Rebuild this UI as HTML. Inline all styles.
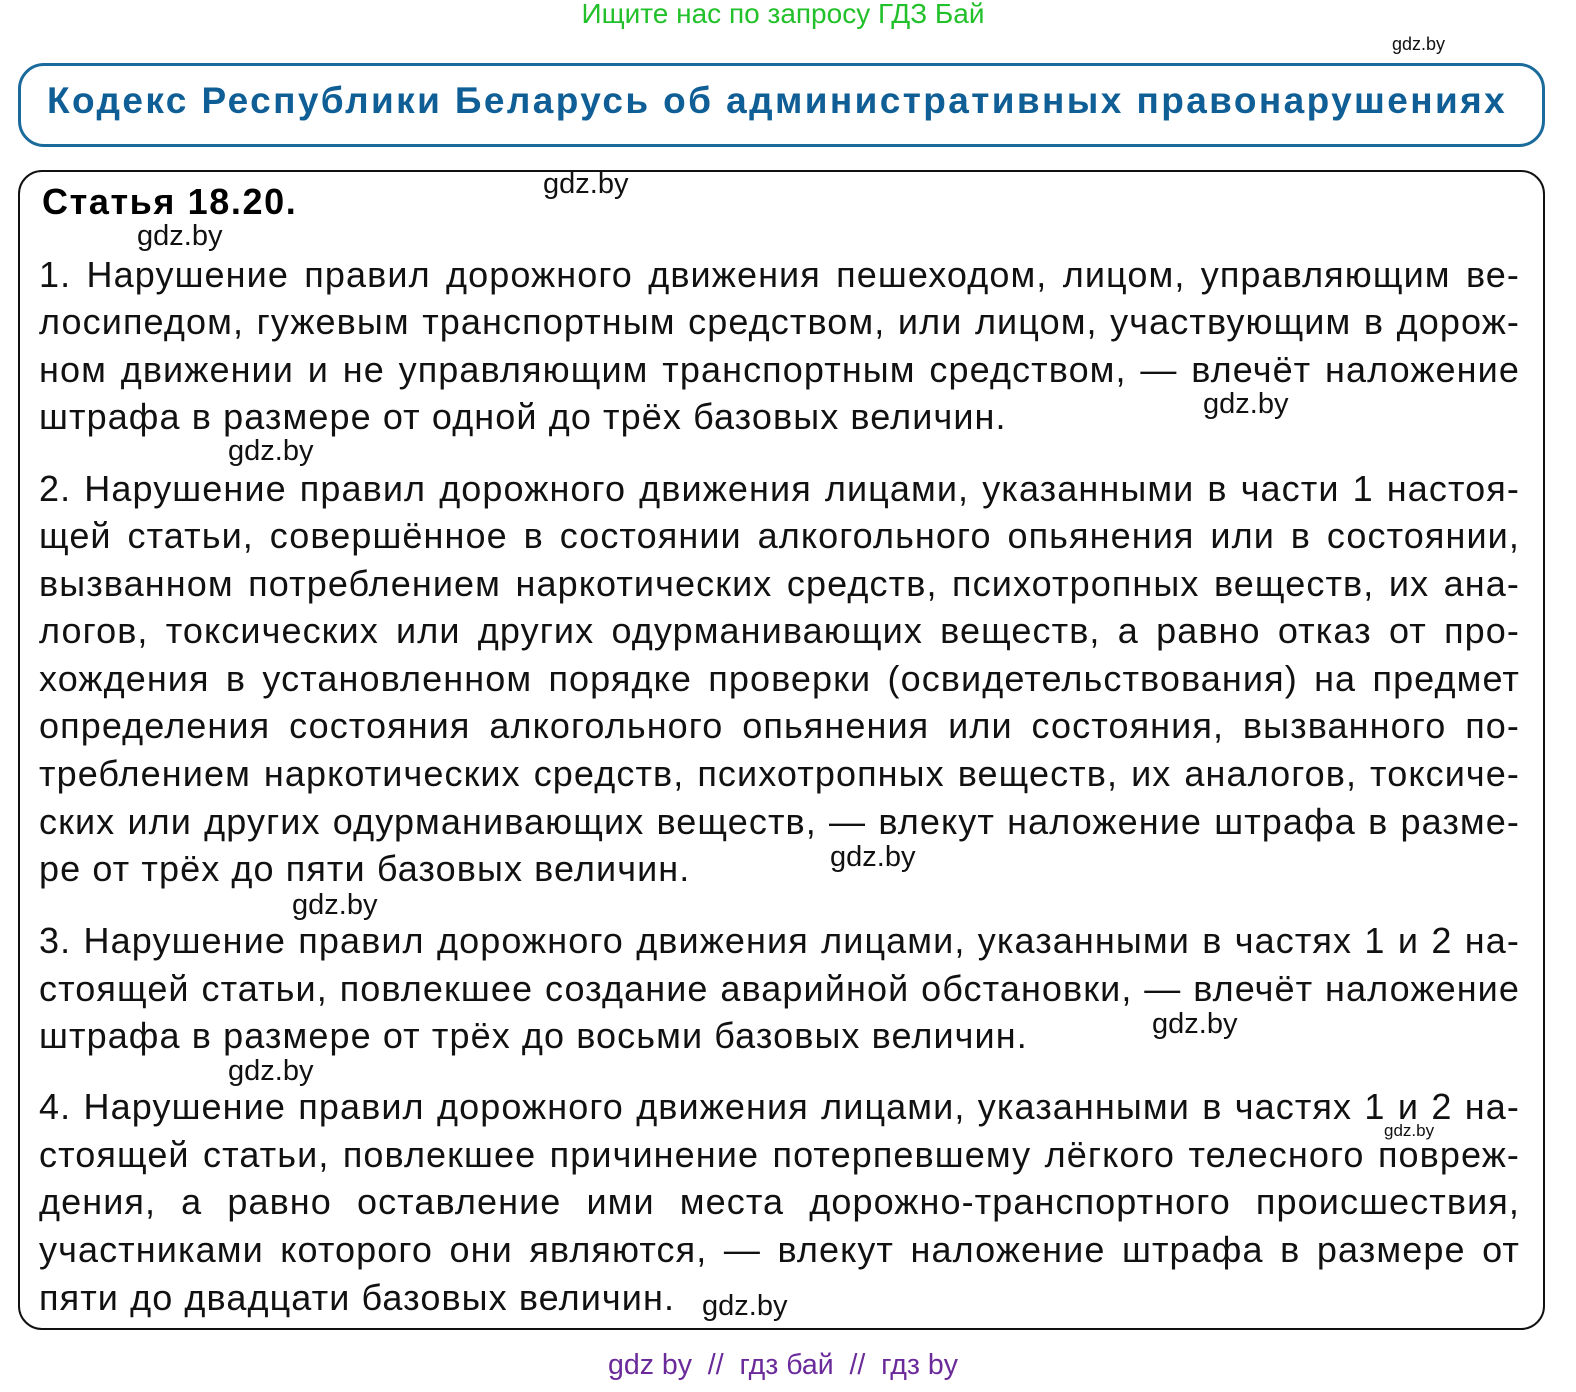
<!DOCTYPE html>
<html><head><meta charset="utf-8"><style>
body{margin:0;width:1576px;height:1392px;background:#fff;position:relative;font-family:"Liberation Sans",sans-serif;overflow:hidden}
.a{position:absolute;white-space:nowrap}
.top{left:0;width:1566px;text-align:center;top:-2px;color:#22c02a;font-size:28px}
.hb{left:18px;right:31px;top:63px;height:78px;border:3px solid #1a6a9c;border-radius:26px}
.ht{left:47px;top:80px;font-size:37px;font-weight:bold;color:#0f5f96;letter-spacing:2.4px}
.box{left:18px;right:31px;top:170px;height:1156px;border:2px solid #111;border-radius:24px}
.l{left:39px;width:1481px;font-size:36px;letter-spacing:1.1px;color:#111;text-align:justify;text-align-last:justify;line-height:40px}
.l.e{text-align-last:left}
.w{font-size:29px;color:#111}
.bot{left:0;width:1566px;text-align:center;top:1349px;color:#6a2a9a;font-size:28.5px}
</style></head><body>
<div class="a top">Ищите нас по запросу ГДЗ Бай</div>
<div class="a w" style="left:1392px;top:34px;font-size:18px">gdz.by</div>
<div class="a hb"></div>
<div class="a ht">Кодекс Республики Беларусь об административных правонарушениях</div>
<div class="a box"></div>
<div class="a" style="left:42px;top:181px;font-size:36px;font-weight:bold;letter-spacing:1.6px">Статья 18.20.</div>
<div class="a w" style="left:543px;top:168px">gdz.by</div>
<div class="a w" style="left:137px;top:220px">gdz.by</div>

<div class="a l" style="top:255px">1. Нарушение правил дорожного движения пешеходом, лицом, управляющим ве-</div>
<div class="a l" style="top:302px">лосипедом, гужевым транспортным средством, или лицом, участвующим в дорож-</div>
<div class="a l" style="top:350px">ном движении и не управляющим транспортным средством, — влечёт наложение</div>
<div class="a l e" style="top:397px">штрафа в размере от одной до трёх базовых величин.</div>
<div class="a w" style="left:1203px;top:388px">gdz.by</div>
<div class="a w" style="left:228px;top:435px">gdz.by</div>

<div class="a l" style="top:469px">2. Нарушение правил дорожного движения лицами, указанными в части 1 настоя-</div>
<div class="a l" style="top:516px">щей статьи, совершённое в состоянии алкогольного опьянения или в состоянии,</div>
<div class="a l" style="top:564px">вызванном потреблением наркотических средств, психотропных веществ, их ана-</div>
<div class="a l" style="top:611px">логов, токсических или других одурманивающих веществ, а равно отказ от про-</div>
<div class="a l" style="top:659px">хождения в установленном порядке проверки (освидетельствования) на предмет</div>
<div class="a l" style="top:706px">определения состояния алкогольного опьянения или состояния, вызванного по-</div>
<div class="a l" style="top:754px">треблением наркотических средств, психотропных веществ, их аналогов, токсиче-</div>
<div class="a l" style="top:802px">ских или других одурманивающих веществ, — влекут наложение штрафа в разме-</div>
<div class="a l e" style="top:849px">ре от трёх до пяти базовых величин.</div>
<div class="a w" style="left:830px;top:841px">gdz.by</div>
<div class="a w" style="left:292px;top:889px">gdz.by</div>

<div class="a l" style="top:921px">3. Нарушение правил дорожного движения лицами, указанными в частях 1 и 2 на-</div>
<div class="a l" style="top:969px">стоящей статьи, повлекшее создание аварийной обстановки, — влечёт наложение</div>
<div class="a l e" style="top:1016px">штрафа в размере от трёх до восьми базовых величин.</div>
<div class="a w" style="left:1152px;top:1008px">gdz.by</div>
<div class="a w" style="left:228px;top:1055px">gdz.by</div>

<div class="a l" style="top:1087px">4. Нарушение правил дорожного движения лицами, указанными в частях 1 и 2 на-</div>
<div class="a w" style="left:1384px;top:1121px;font-size:17px">gdz.by</div>
<div class="a l" style="top:1135px">стоящей статьи, повлекшее причинение потерпевшему лёгкого телесного повреж-</div>
<div class="a l" style="top:1182px">дения, а равно оставление ими места дорожно-транспортного происшествия,</div>
<div class="a l" style="top:1230px">участниками которого они являются, — влекут наложение штрафа в размере от</div>
<div class="a l e" style="top:1278px">пяти до двадцати базовых величин.</div>
<div class="a w" style="left:702px;top:1290px">gdz.by</div>

<div class="a bot">gdz by &nbsp;// &nbsp;гдз бай &nbsp;// &nbsp;гдз by</div>
</body></html>
